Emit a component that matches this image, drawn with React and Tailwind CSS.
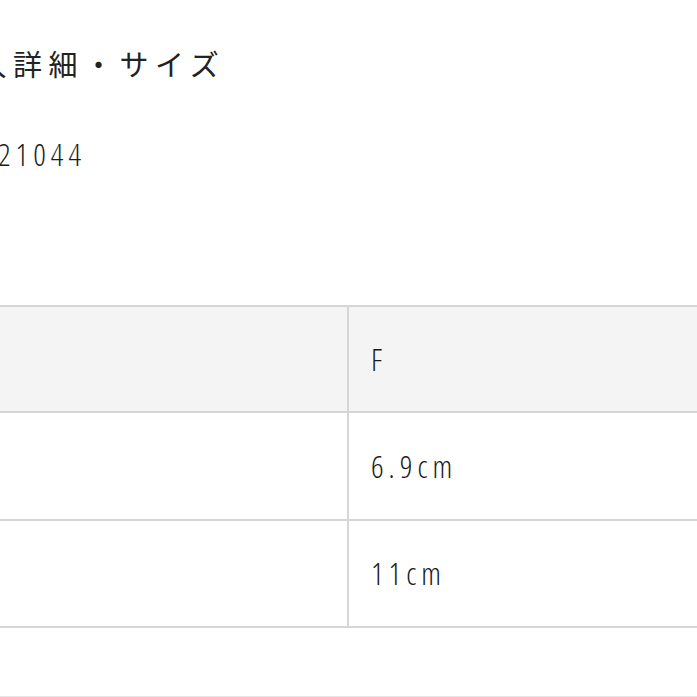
import React from 'react';

const rows = [
  { label: 'サイズ', value: 'F', head: true },
  { label: '高さ', value: '6.9cm' },
  { label: '幅', value: '11cm' },
];

const numFont = "font-['Open_Sans','Liberation_Sans',sans-serif] font-light font-stretch-condensed";

export default function App() {
  return (
    <div className="w-[697px] h-[697px] overflow-hidden bg-white text-[#222]">
      <div className="pt-[42px] -ml-[58px]">
        <h2 className="text-[29px] leading-[42px] tracking-[6.5px] font-normal font-['Noto_Sans_CJK_JP','Noto_Sans',sans-serif] whitespace-nowrap">
          購入詳細・サイズ
        </h2>
      </div>

      <div className={`mt-[50px] -ml-[2px] text-[31px] leading-[40px] tracking-[5px] text-[#1a1a1a] ${numFont}`}>
        21044
      </div>

      <div className="mt-[131px] -ml-[40px] w-[800px] border-t-2 border-[#d6d6d6]">
        {rows.map((r, i) => (
          <div
            key={i}
            className={`flex border-b-2 border-[#d6d6d6] ${r.head ? 'bg-[#f4f4f4] h-[106px]' : i === 1 ? 'h-[108px]' : 'h-[107px]'}`}
          >
            <div className="w-[389px] border-r-2 border-[#d6d6d6]" />
            <div className={`flex-1 flex items-center pl-[22px] text-[31px] tracking-[5px] text-[#1a1a1a] ${numFont}`}>
              {r.value}
            </div>
          </div>
        ))}
        <div className="h-[69px] border-b border-[#e6e6e6]" />
      </div>
    </div>
  );
}
